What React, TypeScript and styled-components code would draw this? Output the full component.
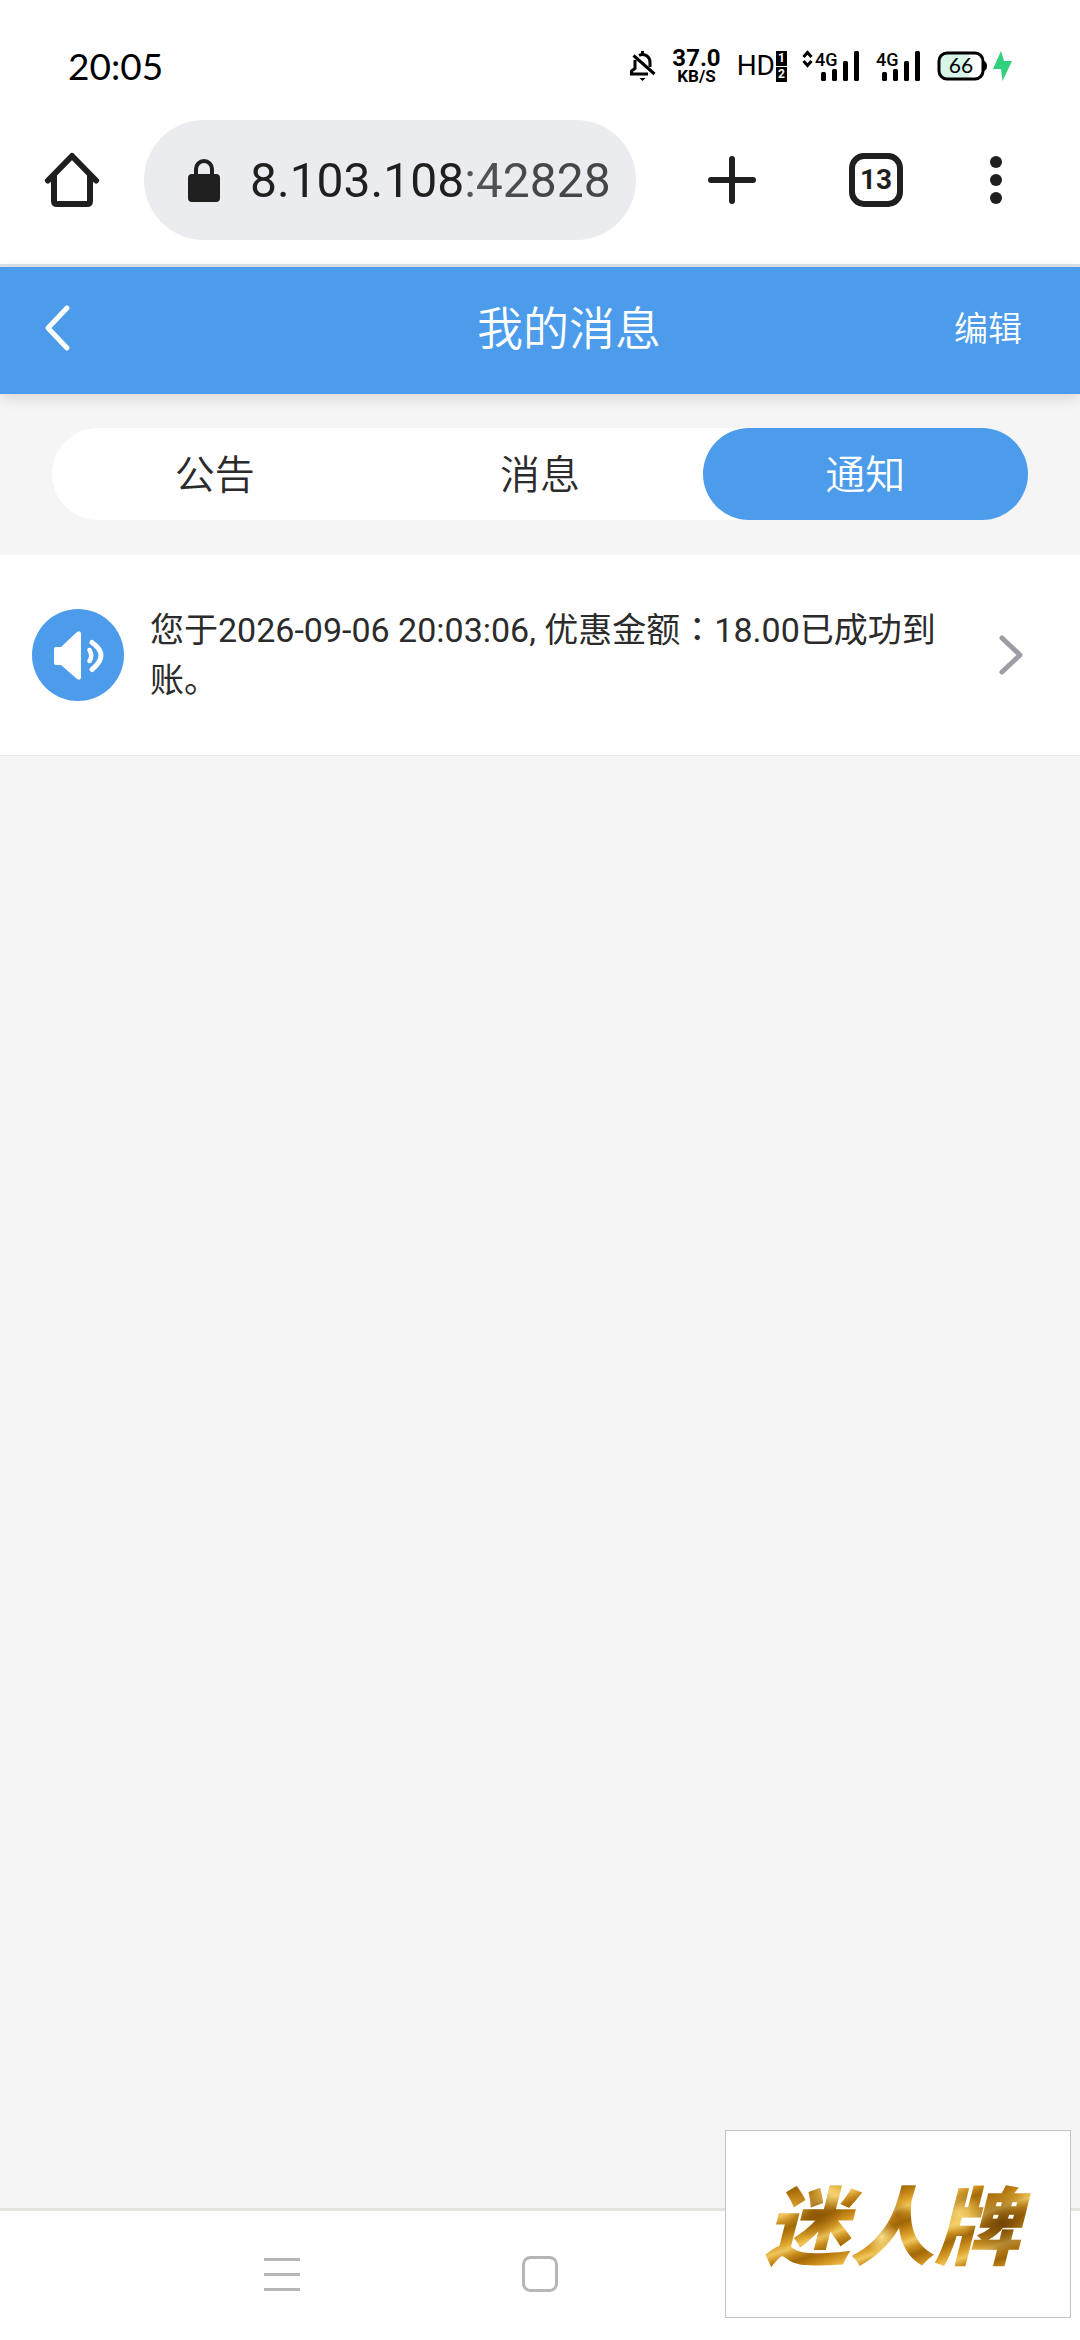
import { useState } from 'react'
import styled, { createGlobalStyle } from 'styled-components'

// ── Data ───────────────────────────────────────────────────────────────────────

const TABS = ['公告', '消息', '通知']

const NOTICES = [
  { id: 1, before: '您于2026-09-06 20:03:06, 优惠金额', after: '18.00已成功到账。' },
]

// ── Base ───────────────────────────────────────────────────────────────────────

const GlobalStyle = createGlobalStyle`
  * { box-sizing: border-box; }

  body {
    margin: 0;
    background: #f5f5f5;
    font-family: Roboto, 'Noto Sans CJK SC', sans-serif;
    color: #2b2b2b;
  }

  button {
    border: 0;
    padding: 0;
    background: none;
    font: inherit;
    color: inherit;
    cursor: pointer;
  }

  svg { display: block; flex-shrink: 0; overflow: visible; }
`

const Screen = styled.div`
  min-height: 100vh;
  display: flex;
  flex-direction: column;
`

// ── Status bar ─────────────────────────────────────────────────────────────────

const StatusBar = styled.div`
  height: 120px;
  padding: 12px 68px 0;
  display: flex;
  align-items: center;
  justify-content: space-between;
  background: #fff;
  color: #000;
`

const Clock = styled.time`
  font-family: Lato, sans-serif;
  font-size: 37px;
  line-height: 44px;
`

const StatusIcons = styled.div`
  display: flex;
  align-items: center;
  gap: 16px;
`

const NetSpeed = styled.div`
  display: flex;
  flex-direction: column;
  align-items: center;
  font-weight: 700;
  font-size: 24px;
  line-height: 20px;
`

const NetUnit = styled.span`
  font-size: 17px;
  line-height: 16px;
`

const HdBadge = styled.div`
  display: flex;
  align-items: center;
  gap: 1px;
  font-size: 28px;
  line-height: 30px;
`

const SimStack = styled.div`
  display: flex;
  flex-direction: column;
  gap: 1px;
`

const SimSlot = styled.span`
  width: 11px;
  height: 15px;
  background: #000;
  color: #fff;
  font-size: 12px;
  font-weight: 700;
  line-height: 15px;
  text-align: center;
`

const Power = styled.div`
  display: flex;
  align-items: center;
  gap: 5px;
`

// ── Browser toolbar ────────────────────────────────────────────────────────────

const Toolbar = styled.div`
  padding: 0 36px 24px 0;
  display: flex;
  align-items: center;
  background: #fff;
  border-bottom: 3px solid #dde3e8;
  color: #1f1f1f;
`

const ToolButton = styled.button<{ $narrow?: boolean }>`
  width: ${(p) => (p.$narrow ? 96 : 144)}px;
  height: 120px;
  display: flex;
  align-items: center;
  justify-content: center;
`

const AddressPill = styled.label`
  flex: 1;
  min-width: 0;
  height: 120px;
  margin-right: 24px;
  padding: 0 16px 0 44px;
  display: flex;
  align-items: center;
  gap: 30px;
  border-radius: 60px;
  background: #ebecf0;
`

// host is dark, port fades to grey
const AddressInput = styled.input`
  flex: 1;
  min-width: 0;
  border: 0;
  padding: 2px 0 0;
  outline: none;
  font: inherit;
  font-size: 48px;
  line-height: 60px;
  color: transparent;
  caret-color: #1f1f1f;
  background: linear-gradient(90deg, #1f1f1f 214px, #55585a 216px, #444746 290px);
  background-clip: text;
  -webkit-background-clip: text;
`

const TabCount = styled.span`
  width: 54px;
  height: 54px;
  border: 6px solid #1f1f1f;
  border-radius: 15px;
  font-size: 28px;
  font-weight: 700;
  line-height: 42px;
  text-align: center;
`

// ── App header ─────────────────────────────────────────────────────────────────

const Header = styled.header`
  height: 127px;
  padding-bottom: 4px;
  display: grid;
  grid-template-columns: 184px 1fr 126px;
  align-items: center;
  background: #4c9ceb;
  color: #fff;
  box-shadow: 0 4px 14px rgba(0, 0, 0, 0.12);
`

const BackButton = styled.button`
  height: 100%;
  padding: 0 0 2px 44px;
`

const Title = styled.h1`
  margin: 0;
  padding-bottom: 8px;
  font-family: 'Noto Sans CJK SC', sans-serif;
  font-size: 46px;
  font-weight: 350;
  line-height: 60px;
  text-align: center;
`

const EditButton = styled.button`
  height: 100%;
  padding-bottom: 4px;
  font-family: 'Noto Sans CJK SC', sans-serif;
  font-size: 34px;
  font-weight: 350;
  text-align: left;
`

// ── Tabs ───────────────────────────────────────────────────────────────────────

const TabBar = styled.div`
  margin: 34px 52px 35px;
  display: flex;
  border-radius: 46px;
  background: #fff;
`

const Tab = styled.button<{ $active: boolean }>`
  flex: 1;
  height: 92px;
  padding-bottom: 4px;
  border-radius: 46px;
  font-family: 'Noto Sans CJK SC', sans-serif;
  font-size: 40px;
  font-weight: 350;
  background: ${(p) => (p.$active ? '#4c9ceb' : 'transparent')};
  color: ${(p) => (p.$active ? '#fff' : '#2b2b2b')};
`

// ── Notice list ────────────────────────────────────────────────────────────────

const NoticeList = styled.main`
  flex: 1;
`

const NoticeRow = styled.a`
  min-height: 201px;
  padding: 0 57px 0 32px;
  display: flex;
  align-items: center;
  background: #fff;
  border-bottom: 1px solid #e8e8e8;
  color: inherit;
  text-decoration: none;
`

const NoticeIcon = styled.span`
  flex-shrink: 0;
  width: 92px;
  height: 92px;
  border-radius: 50%;
  background: #4c9ceb;
`

const NoticeText = styled.p`
  flex: 1;
  margin: 0 48px 2px 26px;
  font-size: 34px;
  line-height: 50px;
`

const WideColon = styled.span`
  font-family: 'Noto Sans CJK TC', sans-serif;
`

// ── System navigation ──────────────────────────────────────────────────────────

const SystemNav = styled.nav`
  height: 132px;
  padding: 0 153px 3px;
  display: flex;
  align-items: center;
  background: #fff;
  border-top: 3px solid #e2e4e0;
`

const NavButton = styled.button`
  flex: 1;
  height: 100%;
  display: flex;
  align-items: center;
  justify-content: center;
`

const Watermark = styled.div`
  position: fixed;
  right: 9px;
  bottom: 22px;
  width: 346px;
  height: 188px;
  padding-bottom: 6px;
  display: flex;
  align-items: center;
  justify-content: center;
  background: #fff;
  border: 1px solid #c4c4c4;
`

const GoldText = styled.span`
  padding: 0 16px 0 4px;
  font-family: 'Noto Sans CJK SC', sans-serif;
  font-size: 85px;
  font-weight: 900;
  font-style: italic;
  line-height: 100px;
  color: transparent;
  background:
    radial-gradient(circle at 20% 42%, rgba(130, 78, 4, 0.8), transparent 12%),
    radial-gradient(circle at 50% 44%, rgba(150, 90, 4, 0.7), transparent 9%),
    radial-gradient(circle at 88% 54%, rgba(110, 66, 4, 0.9), transparent 15%),
    radial-gradient(circle at 44% 66%, rgba(255, 232, 150, 0.9), transparent 10%),
    radial-gradient(circle at 72% 42%, rgba(255, 226, 130, 0.8), transparent 11%),
    radial-gradient(circle at 25% 22%, rgba(255, 226, 130, 0.9), transparent 8%),
    repeating-linear-gradient(160deg, #b97a10 0, #dda32c 9px, #efc65c 15px, #c98c1c 22px, #a26a08 29px, #b97a10 34px);
  background-clip: text;
  -webkit-background-clip: text;
`

// ── Icons ──────────────────────────────────────────────────────────────────────

function BellOffIcon() {
  return (
    <svg width="26" height="32" viewBox="0 0 26 32" fill="none" stroke="#000" strokeWidth="3">
      <path d="M12.500 1v4M9 5.500c5-2.500 11 .5 11 7V17" />
      <path d="M5 10v8.500L1.500 21v3H18" />
      <path d="M3.500 5.500 24.500 24" />
      <path d="M9.500 28h6l-3 3z" fill="#000" stroke="none" />
    </svg>
  )
}

function SignalIcon({ arrows }: { arrows?: boolean }) {
  return (
    <svg width={arrows ? 57 : 45} height="32" viewBox={arrows ? '-12 0 57 32' : '0 0 45 32'}>
      {arrows && (
        <path d="M-11.500 7l4-4.500 4 4.500M-11.500 11l4 4.500 4-4.500" fill="none" stroke="#000" strokeWidth="3" />
      )}
      <text x="0" y="16" fontSize="18" fontWeight="500">4G</text>
      <rect x="6" y="22" width="5" height="9" rx="1.500" />
      <rect x="17" y="19" width="5" height="12" rx="1.500" />
      <rect x="28" y="11" width="5" height="20" rx="1.500" />
      <rect x="39" y="1" width="5" height="30" rx="1.500" />
    </svg>
  )
}

function BatteryIcon() {
  return (
    <svg width="50" height="30" viewBox="0 0 50 30">
      <rect x="2" y="2" width="44" height="26" rx="8" fill="#fff" />
      <path d="M10 2h22v26H10a8 8 0 0 1-8-8V10a8 8 0 0 1 8-8z" fill="#d8f5e9" />
      <rect x="2" y="2" width="44" height="26" rx="8" fill="none" stroke="#000" strokeWidth="3" />
      <path d="M47 10q3 1 3 5t-3 5z" />
      <text x="24" y="22" fontSize="21" fontFamily="Lato, sans-serif" textAnchor="middle">66</text>
    </svg>
  )
}

function BoltIcon() {
  return (
    <svg width="20" height="32" viewBox="0 0 20 32">
      <path d="M9 1 1 19h8l1.500 12L20 11h-8z" fill="#31d07c" />
    </svg>
  )
}

function HomeIcon() {
  return (
    <svg width="54" height="54" viewBox="0 0 54 54" fill="none" stroke="#1f1f1f" strokeWidth="6">
      <path d="M3 27.500 27 3l24 24.500" strokeLinecap="round" strokeLinejoin="round" />
      <path d="M9 22v26q0 3 3 3h30q3 0 3-3V22" />
    </svg>
  )
}

function LockIcon() {
  return (
    <svg width="32" height="43" viewBox="0 0 32 43">
      <rect y="15" width="32" height="28" rx="4" fill="#1f1f1f" />
      <path d="M8 16v-6a8 8 0 0 1 16 0v6" fill="none" stroke="#1f1f1f" strokeWidth="4" />
    </svg>
  )
}

function SpeakerIcon() {
  return (
    <svg width="92" height="92" viewBox="0 0 92 92" fill="#fff">
      <path d="M24 38h5l16-15q4-2 4 2v43q0 4-4 2L29 56h-5q-2 0-2-2V40q0-2 2-2z" />
      <path d="M57.500 41q3.500 5.500 0 11" fill="none" stroke="#fff" strokeWidth="4.500" strokeLinecap="round" />
      <path d="M60 33.500q18 12.500 0 27" fill="none" stroke="#fff" strokeWidth="5" strokeLinecap="round" />
    </svg>
  )
}

// ── App ────────────────────────────────────────────────────────────────────────

export default function App() {
  const [active, setActive] = useState('通知')

  return (
    <Screen>
      <GlobalStyle />

      <StatusBar>
        <Clock>20:05</Clock>
        <StatusIcons>
          <BellOffIcon />
          <NetSpeed>
            <span>37.0</span>
            <NetUnit>KB/S</NetUnit>
          </NetSpeed>
          <HdBadge>
            HD
            <SimStack>
              <SimSlot>1</SimSlot>
              <SimSlot>2</SimSlot>
            </SimStack>
          </HdBadge>
          <SignalIcon arrows />
          <SignalIcon />
          <Power>
            <BatteryIcon />
            <BoltIcon />
          </Power>
        </StatusIcons>
      </StatusBar>

      <Toolbar>
        <ToolButton aria-label="Home">
          <HomeIcon />
        </ToolButton>
        <AddressPill>
          <LockIcon />
          <AddressInput type="text" aria-label="Address" defaultValue="8.103.108:42828" />
        </AddressPill>
        <ToolButton aria-label="New tab">
          <svg width="48" height="48" viewBox="0 0 48 48" stroke="#1f1f1f" strokeWidth="6" strokeLinecap="round">
            <path d="M24 3v42M3 24h42" />
          </svg>
        </ToolButton>
        <ToolButton aria-label="Open tabs">
          <TabCount>13</TabCount>
        </ToolButton>
        <ToolButton $narrow aria-label="Menu">
          <svg width="12" height="48" viewBox="0 0 12 48" fill="#1f1f1f">
            <circle cx="6" cy="6" r="6" />
            <circle cx="6" cy="24" r="6" />
            <circle cx="6" cy="42" r="6" />
          </svg>
        </ToolButton>
      </Toolbar>

      <Header>
        <BackButton aria-label="Back">
          <svg width="26" height="46" viewBox="0 0 26 46" fill="none" stroke="#fff" strokeWidth="5" strokeLinecap="round" strokeLinejoin="round">
            <path d="M23 3 4 23l19 20" />
          </svg>
        </BackButton>
        <Title>我的消息</Title>
        <EditButton>编辑</EditButton>
      </Header>

      <TabBar role="tablist">
        {TABS.map((tab) => (
          <Tab
            key={tab}
            role="tab"
            aria-selected={tab === active}
            $active={tab === active}
            onClick={() => setActive(tab)}
          >
            {tab}
          </Tab>
        ))}
      </TabBar>

      <NoticeList>
        {NOTICES.map((n) => (
          <NoticeRow key={n.id} href={`#notice-${n.id}`}>
            <NoticeIcon>
              <SpeakerIcon />
            </NoticeIcon>
            <NoticeText>
              {n.before}
              <WideColon>：</WideColon>
              {n.after}
            </NoticeText>
            <svg width="24" height="40" viewBox="0 0 24 40" fill="none" stroke="#9e9da3" strokeWidth="5" strokeLinecap="round" strokeLinejoin="round">
              <path d="m3 3 18 17L3 37" />
            </svg>
          </NoticeRow>
        ))}
      </NoticeList>

      <SystemNav>
        <NavButton aria-label="Recent apps">
          <svg width="36" height="33" viewBox="0 0 36 33" stroke="#b6b6b6" strokeWidth="3">
            <path d="M0 1.500h36M0 16.500h36M0 31.500h36" />
          </svg>
        </NavButton>
        <NavButton aria-label="Home screen">
          <svg width="36" height="36" viewBox="0 0 36 36" fill="none" stroke="#b6b6b6" strokeWidth="3">
            <rect x="1.500" y="1.500" width="33" height="33" rx="7" />
          </svg>
        </NavButton>
        <NavButton aria-label="Previous">
          <svg width="36" height="36" viewBox="0 0 36 36" fill="none" stroke="#b6b6b6" strokeWidth="3">
            <path d="M28 4 6 18l22 14z" strokeLinejoin="round" />
          </svg>
        </NavButton>
      </SystemNav>

      <Watermark>
        <GoldText>迷人牌</GoldText>
      </Watermark>
    </Screen>
  )
}
